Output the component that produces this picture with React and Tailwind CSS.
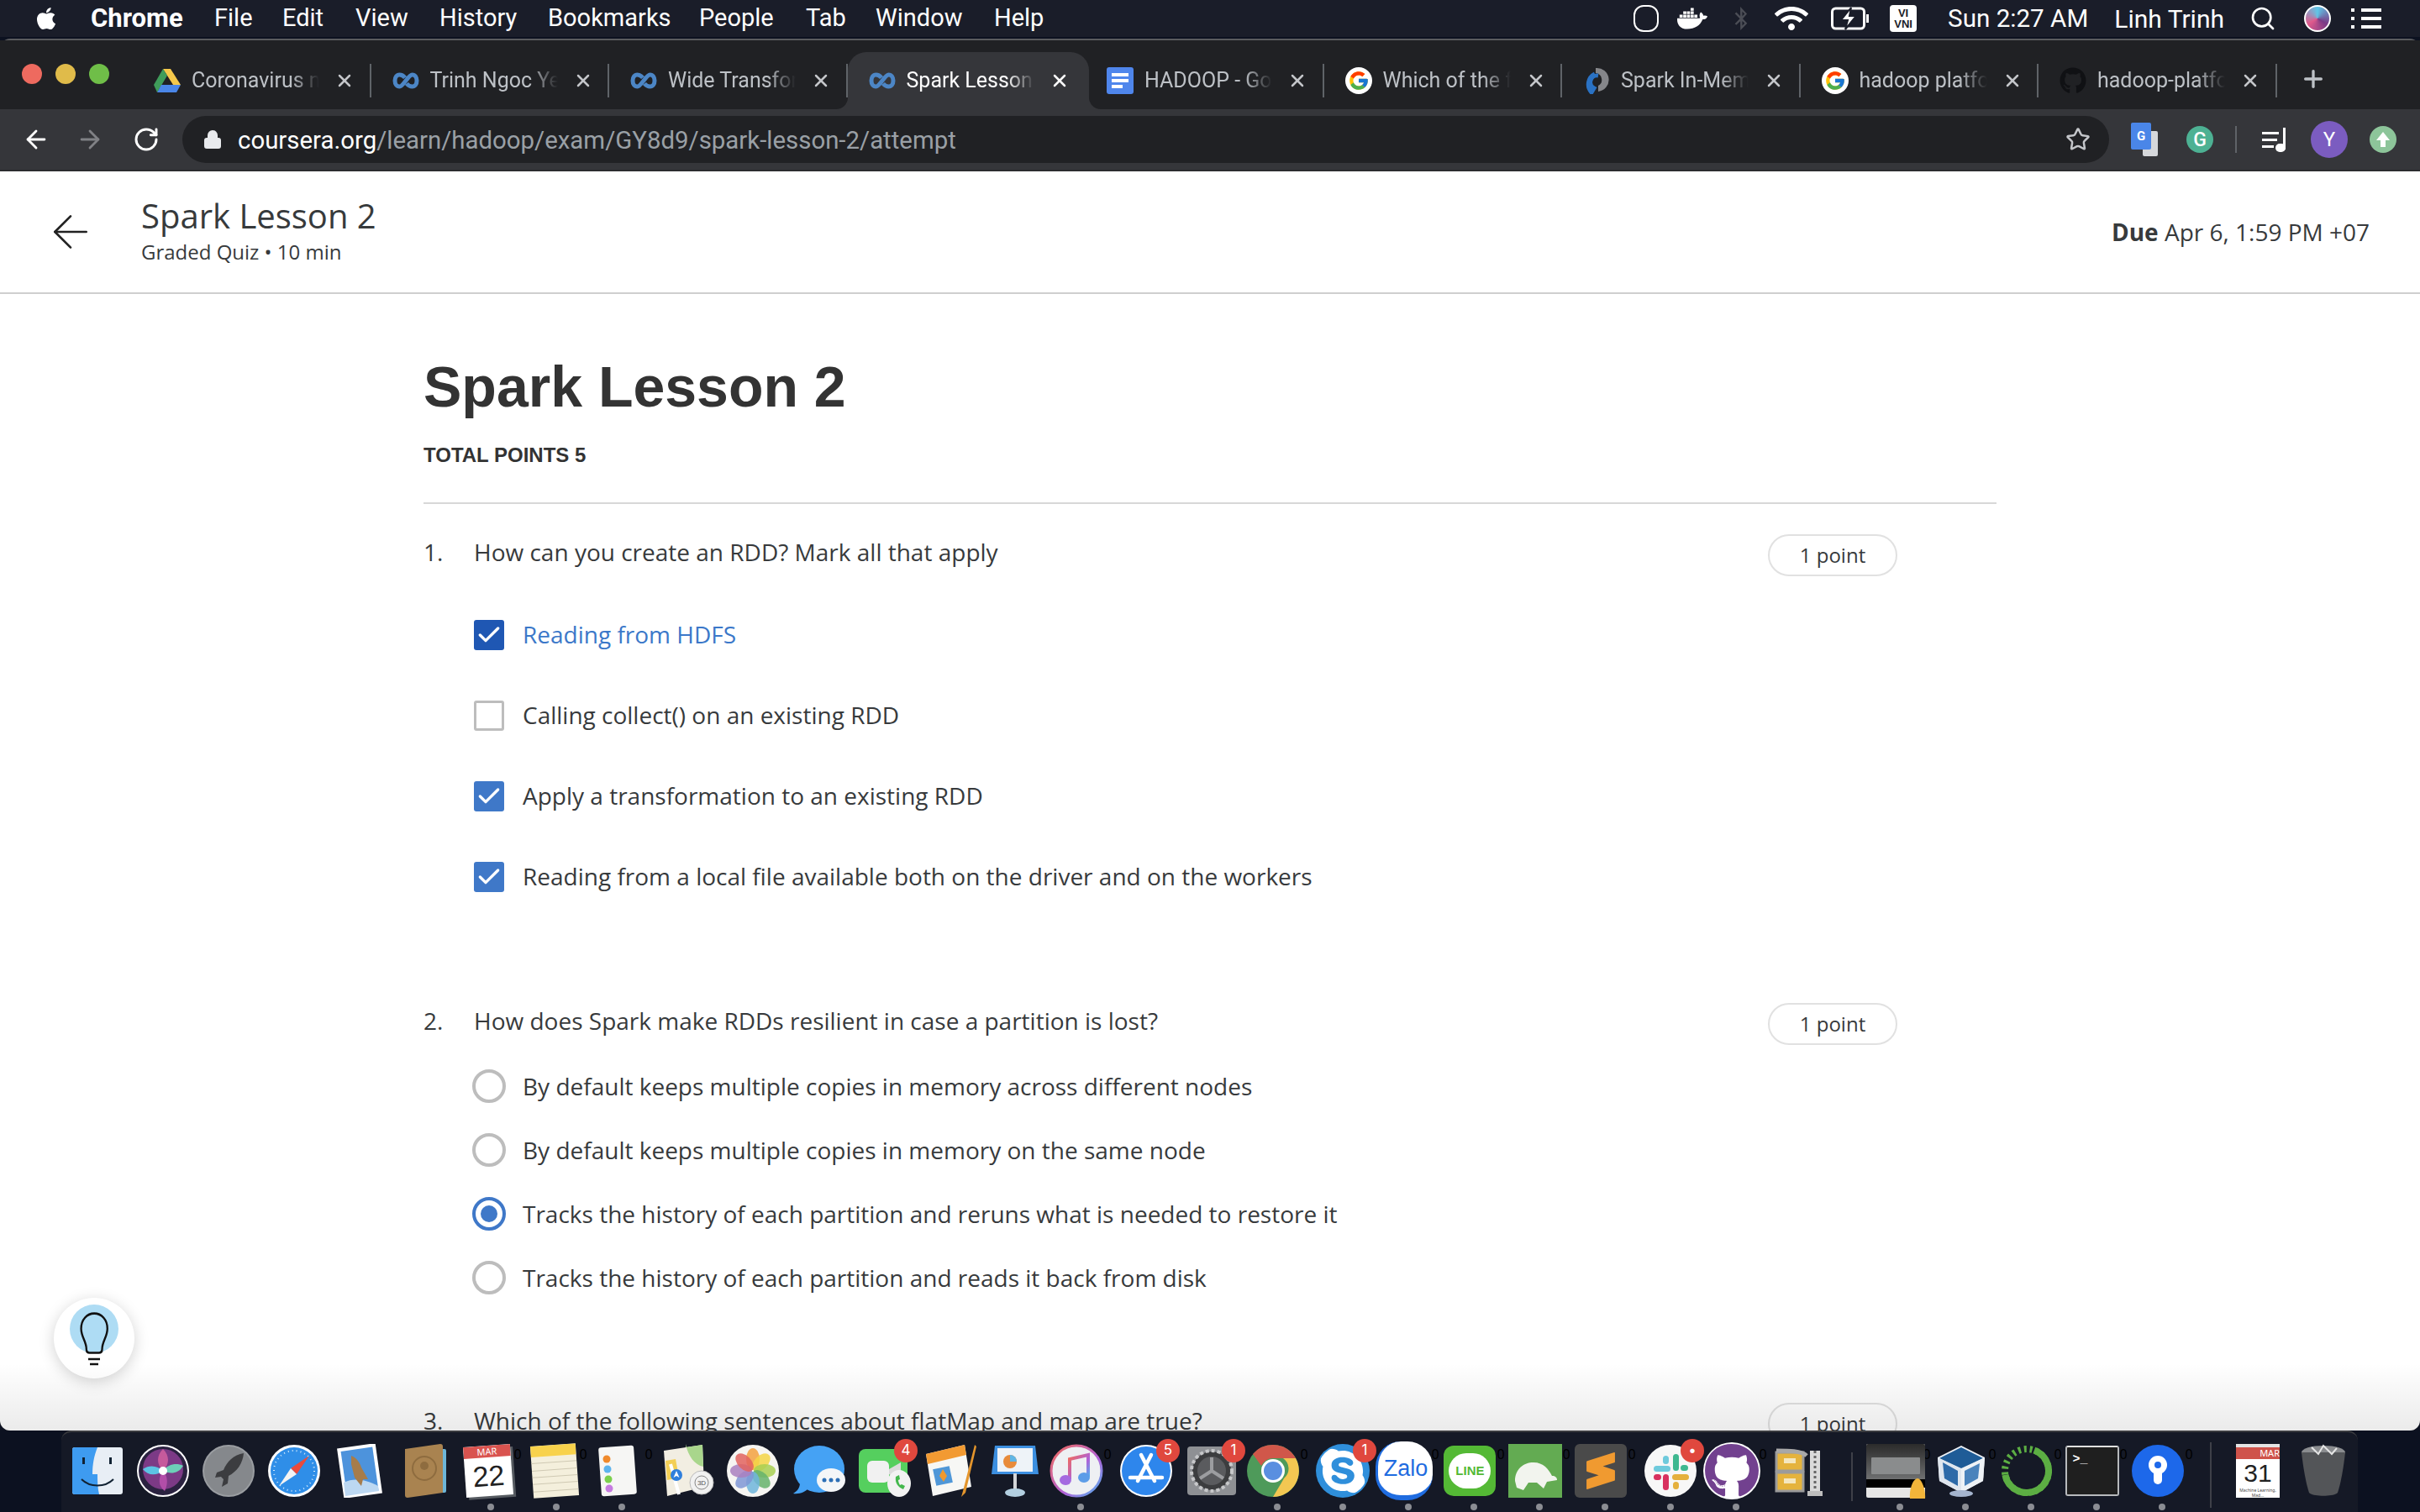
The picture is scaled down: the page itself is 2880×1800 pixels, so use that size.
import { ArrowLeft, ArrowRight, Check, Lock, Plus, RotateCw, Search, Star, X } from "lucide-react";
import { FaApple, FaBluetoothB, FaDocker, FaGithub, FaSkype, FaWifi } from "react-icons/fa";
import { FcGoogle } from "react-icons/fc";
import { SiSublimetext } from "react-icons/si";

const menus = [
  ["File", "w-[81px]"],
  ["Edit", "w-[87px]"],
  ["View", "w-[100px]"],
  ["History", "w-[129px]"],
  ["Bookmarks", "w-[180px]"],
  ["People", "w-[127px]"],
  ["Tab", "w-[83px]"],
  ["Window", "w-[141px]"],
  ["Help", "w-[80px]"],
];

function CourseraIcon() {
  return (
    <svg width="32" height="20" viewBox="0 0 32 20" fill="none" stroke="#4c86c6" strokeWidth="5">
      <path d="M15 6.5C13 4 11 3 8.5 3 5 3 3 6 3 10s2 7 5.5 7C13 17 19 3 23.5 3 27 3 29 6 29 10s-2 7-5.5 7c-2.5 0-4.500-1-6.500-3.500" />
    </svg>
  );
}

function DriveIcon() {
  return (
    <svg width="32" height="30" viewBox="0 0 32 30">
      <path d="M11 1h9l12 19h-9z" fill="#f5c84b" />
      <path d="M11 1 0 20l4 9 12-20z" fill="#3f9c5a" />
      <path d="M9 20h23l-5 9H4z" fill="#4a86e8" />
    </svg>
  );
}

function DocsIcon() {
  return (
    <div className="flex h-[32px] w-[32px] flex-col items-start justify-center gap-[3px] rounded-[3px] bg-[#4f86ec] pl-[6px]">
      <div className="h-[4px] w-[20px] bg-white" />
      <div className="h-[4px] w-[20px] bg-white" />
      <div className="h-[4px] w-[13px] bg-white" />
    </div>
  );
}

function GoogleIcon() {
  return (
    <div className="flex h-[32px] w-[32px] items-center justify-center rounded-full bg-white">
      <FcGoogle size={26} />
    </div>
  );
}

function SparkTabIcon() {
  return (
    <svg width="30" height="32" viewBox="0 0 30 32" fill="none">
      <path d="M14 1a14 14 0 0 1 3 28v-7a8 8 0 0 0-3-15z" fill="#85868a" />
      <path d="M13 8a14 14 0 0 0-4 22l3-5a8 8 0 0 1 5-15" stroke="#2a72c4" strokeWidth="5" />
    </svg>
  );
}

const tabs = [
  ["Coronavirus near me", <DriveIcon />],
  ["Trinh Ngoc Yen", <CourseraIcon />],
  ["Wide Transformations", <CourseraIcon />],
  ["Spark Lesson 2", <CourseraIcon />, true],
  ["HADOOP - Google Docs", <DocsIcon />],
  ["Which of the following", <GoogleIcon />],
  ["Spark In-Memory", <SparkTabIcon />],
  ["hadoop platform", <GoogleIcon />],
  ["hadoop-platform", <FaGithub size={32} color="#101114" />],
];

function Tab({ title, icon, active }) {
  return (
    <div className="relative flex h-[68px] w-[283.5px] shrink-0 items-center">
      {active && (
        <>
          <div className="absolute inset-y-0 left-0 right-[-4px] rounded-t-[22px] bg-[#35363a]" />
          <div className="absolute bottom-0 left-[-14px] h-[14px] w-[14px] bg-[#35363a]">
            <div className="h-full w-full rounded-br-[14px] bg-[#202124]" />
          </div>
          <div className="absolute bottom-0 right-[-18px] h-[14px] w-[14px] bg-[#35363a]">
            <div className="h-full w-full rounded-bl-[14px] bg-[#202124]" />
          </div>
        </>
      )}
      <div className="relative flex w-[58px] shrink-0 justify-center pl-[24px]">{icon}</div>
      <div className={`relative ml-[12px] w-[152px] overflow-hidden whitespace-nowrap text-[25px] [mask-image:linear-gradient(to_right,black_78%,transparent)] ${active ? "text-white" : "text-[#bdc1c6]"}`}>
        {title}
      </div>
      <X className={`relative ml-[18px] ${active ? "text-white" : "text-[#c4c6ca]"}`} size={24} strokeWidth={2.5} />
      {!active && <div className="absolute right-0 top-[14px] h-[40px] w-[2px] bg-[#5f6368]" />}
    </div>
  );
}

// dock icons, all drawn on a 64 box
function Finder() {
  return (
    <svg viewBox="0 0 64 64" className="h-full w-full">
      <rect x="2" y="4" width="60" height="56" rx="3" fill="#e8eef5" />
      <path d="M5 4h27c-4 10-6 20-6 32h6c0 8 0 16 2 24H5a3 3 0 0 1-3-3V7a3 3 0 0 1 3-3z" fill="#3e9bf0" />
      <rect x="14" y="16" width="3" height="8" fill="#123" />
      <rect x="46" y="16" width="3" height="8" fill="#123" />
      <path d="M13 42c10 10 28 10 38 0" fill="none" stroke="#123" strokeWidth="2" />
    </svg>
  );
}

function Siri() {
  return (
    <svg viewBox="0 0 64 64" className="h-full w-full">
      <circle cx="32" cy="32" r="31" fill="#fff" />
      <circle cx="32" cy="32" r="29" fill="#2a2240" />
      <circle cx="32" cy="30" r="24" fill="#7c3a86" />
      <path d="M32 6c8 8 8 18 0 26-8-8-8-18 0-26z" fill="#c65a9c" />
      <path d="M8 30c8-6 18-4 24 2-8 6-18 6-24-2z" fill="#5cc3e4" />
      <path d="M56 26c-6 10-16 10-24 6 6-8 16-10 24-6z" fill="#6dd0b8" />
      <path d="M32 32c6 6 6 16 2 24-8-6-8-16-2-24z" fill="#b24ea8" />
      <circle cx="32" cy="32" r="5" fill="#fff" />
    </svg>
  );
}

function Launchpad() {
  return (
    <svg viewBox="0 0 64 64" className="h-full w-full">
      <circle cx="32" cy="32" r="31" fill="#9a9da1" />
      <circle cx="32" cy="32" r="29" fill="#85888c" />
      <path d="M50 11c-12 2-20 10-24 20l-8 3-2 6 7-1 3 3-2 9 7-4 1-9c10-5 17-15 18-27z" fill="#3c3d40" />
    </svg>
  );
}

function Safari() {
  return (
    <svg viewBox="0 0 64 64" className="h-full w-full">
      <circle cx="32" cy="32" r="31" fill="#fff" />
      <circle cx="32" cy="32" r="28" fill="#2f8ee8" />
      <circle cx="32" cy="32" r="24" fill="none" stroke="#d6ebfb" strokeWidth="2" strokeDasharray="1 4" />
      <path d="m50 14-22 15 7 7z" fill="#ea4a3c" />
      <path d="m14 50 14-21 7 7z" fill="#f3f3f3" />
    </svg>
  );
}

function Mail() {
  return (
    <svg viewBox="0 0 64 64" className="h-full w-full">
      <rect x="9" y="2" width="46" height="60" fill="#fff" transform="rotate(-8 32 32)" />
      <rect x="13" y="6" width="38" height="52" fill="#4d93dc" transform="rotate(-8 32 32)" />
      <path d="M13 46c12-6 26-4 41 4l1 6-40 6z" fill="#bcd8f2" />
      <path d="M22 14c6 2 10 8 12 14l8 14-6 0-2 8-8-10-4-16z" fill="#a67c4b" />
    </svg>
  );
}

function Contacts() {
  return (
    <svg viewBox="0 0 64 64" className="h-full w-full">
      <rect x="50" y="6" width="7" height="52" rx="2" fill="#6db6d8" />
      <path d="M8 6 50 0c2 0 3 1 3 3v55L11 64c-2 0-3-1-3-3z" fill="#a98350" />
      <circle cx="31" cy="29" r="14" fill="none" stroke="#8e6c3f" strokeWidth="2" />
      <circle cx="31" cy="26" r="5" fill="#8e6c3f" />
    </svg>
  );
}

function CalendarIcon() {
  return (
    <div className="ml-[3px] flex h-[60px] w-[56px] rotate-[-4deg] flex-col overflow-hidden bg-white shadow-[3px_3px_0_#555a60]">
      <div className="h-[14px] bg-[#d9534f] text-center text-[11px] leading-[14px] text-white">MAR</div>
      <div className="flex-1 text-center font-['Liberation_Sans',sans-serif] text-[34px] leading-[44px] text-[#222]">22</div>
    </div>
  );
}

function Notes() {
  return (
    <div className="ml-[6px] flex h-[62px] w-[54px] rotate-[-4deg] flex-col overflow-hidden bg-[#f4efdc]">
      <div className="h-[13px] bg-[#f8d24c]" />
      <div className="flex flex-1 flex-col justify-evenly">
        <div className="h-px bg-[#cfc9b3]" />
        <div className="h-px bg-[#cfc9b3]" />
        <div className="h-px bg-[#cfc9b3]" />
        <div className="h-px bg-[#cfc9b3]" />
        <div className="h-px bg-[#cfc9b3]" />
      </div>
    </div>
  );
}

function Reminders() {
  return (
    <svg viewBox="0 0 64 64" className="h-full w-full">
      <rect x="11" y="3" width="42" height="58" rx="3" fill="#f6f6f4" transform="rotate(-4 32 32)" />
      <circle cx="19" cy="18" r="4.5" fill="#f08a2c" />
      <circle cx="20" cy="30" r="4.5" fill="#5db4ee" />
      <circle cx="21" cy="42" r="4.5" fill="#7bd04c" />
      <circle cx="22" cy="53" r="4.5" fill="#c67be0" />
    </svg>
  );
}

function Maps() {
  return (
    <svg viewBox="0 0 64 64" className="h-full w-full">
      <path d="M4 8 50 1l2 50-44 11z" fill="#f2eee2" />
      <path d="M30 4 50 1l1 26c-10-2-18-12-21-27z" fill="#a9d68c" />
      <path d="M6 20 18 18l4 22-14 3z" fill="#f3cf56" />
      <path d="M12 24 22 60" stroke="#fff" strokeWidth="4" />
      <circle cx="19" cy="37" r="7" fill="#2f7fdc" />
      <path d="m19 32 3.5 8-3.5-2-3.5 2z" fill="#fff" />
      <circle cx="49" cy="46" r="14" fill="#f1f1f1" stroke="#bbb" />
      <circle cx="49" cy="46" r="8" fill="none" stroke="#888" />
      <text x="49" y="49" textAnchor="middle" fontSize="8" fill="#555" fontFamily="Liberation Sans">3D</text>
    </svg>
  );
}

function Photos() {
  const petals = ["#f3a13f", "#f5d547", "#a8cf52", "#66b36c", "#6fb5dc", "#7f97d6", "#a97fc0", "#e2635f"];
  return (
    <svg viewBox="0 0 64 64" className="h-full w-full">
      <circle cx="32" cy="32" r="31" fill="#f6f5f2" />
      {petals.map((c, i) => (
        <ellipse key={c} cx="32" cy="18" rx="8" ry="13" fill={c} opacity=".85" transform={`rotate(${i * 45} 32 32)`} />
      ))}
    </svg>
  );
}

function Messages() {
  return (
    <svg viewBox="0 0 64 64" className="h-full w-full">
      <ellipse cx="33" cy="30" rx="30" ry="28" fill="#45a2f4" />
      <path d="M10 46c0 6-3 10-8 13 8 1 14-2 18-6z" fill="#45a2f4" />
      <ellipse cx="47" cy="43" rx="17" ry="14" fill="#f4f6f8" />
      <circle cx="39" cy="43" r="2.5" fill="#2d6fb6" />
      <circle cx="47" cy="43" r="2.5" fill="#2d6fb6" />
      <circle cx="55" cy="43" r="2.5" fill="#2d6fb6" />
    </svg>
  );
}

function FaceTime() {
  return (
    <svg viewBox="0 0 64 64" className="h-full w-full">
      <rect x="2" y="6" width="58" height="52" rx="8" fill="#55cf5e" />
      <rect x="12" y="20" width="26" height="26" rx="6" fill="#f1f1f1" />
      <path d="m38 30 14-8v22l-14-8z" fill="#dcdcdc" />
      <ellipse cx="50" cy="47" rx="14" ry="16" fill="#f2f2f2" />
      <path d="M46 39c-1 7 2 12 9 15l2-4-4-2-2 1c-1-2-2-4-2-6l2-1-1-5z" fill="#43b84c" />
    </svg>
  );
}

function Pages() {
  return (
    <svg viewBox="0 0 64 64" className="h-full w-full">
      <path d="M4 12 50 1l8 50-46 11z" fill="#f7f7f5" />
      <path d="M4 12 50 1l2 12L6 24z" fill="#f29a32" />
      <rect x="14" y="28" width="20" height="20" fill="#4f97d8" transform="rotate(-12 24 38)" />
      <path d="m24 30 5 8-4 7-5-7z" fill="#f0992e" />
      <path d="M62 1 48 56l-2 7 5-5 13-55z" fill="#e4952c" />
    </svg>
  );
}

function Keynote() {
  return (
    <svg viewBox="0 0 64 64" className="h-full w-full">
      <path d="M4 36 8 2h48l4 34z" fill="#3c8fe0" />
      <rect x="11" y="5" width="42" height="28" fill="#eef3f8" />
      <circle cx="26" cy="21" r="8" fill="#e88b3b" />
      <path d="M26 21V13a8 8 0 0 1 8 8z" fill="#5fb6e6" />
      <rect x="30" y="35" width="4" height="20" fill="#d3d5d8" />
      <ellipse cx="32" cy="58" rx="12" ry="5" fill="#b3cfe0" />
    </svg>
  );
}

function Itunes() {
  return (
    <svg viewBox="0 0 64 64" className="h-full w-full">
      <defs>
        <linearGradient id="itunesRing" x1="0" y1="0" x2="1" y2="1">
          <stop offset="0" stopColor="#f26a5a" />
          <stop offset=".6" stopColor="#b062d8" />
          <stop offset="1" stopColor="#4db6f0" />
        </linearGradient>
      </defs>
      <circle cx="32" cy="32" r="30" fill="#eef0f3" stroke="url(#itunesRing)" strokeWidth="3" />
      <path d="M24 42V18l22-5v26" fill="none" stroke="url(#itunesRing)" strokeWidth="4" />
      <ellipse cx="19" cy="43" rx="7" ry="6" fill="#a56be0" />
      <ellipse cx="41" cy="40" rx="7" ry="6" fill="#5c9de8" />
    </svg>
  );
}

function AppStore() {
  return (
    <svg viewBox="0 0 64 64" className="h-full w-full">
      <circle cx="32" cy="32" r="31" fill="#fff" />
      <circle cx="32" cy="32" r="29" fill="#2e86ec" />
      <path d="m38 13-16 31M26 13l16 31M13 40h38" stroke="#fff" strokeWidth="4.5" strokeLinecap="round" fill="none" />
    </svg>
  );
}

function SysPrefs() {
  return (
    <svg viewBox="0 0 64 64" className="h-full w-full">
      <rect x="3" y="3" width="58" height="58" rx="4" fill="#8e9094" />
      <circle cx="32" cy="32" r="23" fill="#3c3d3f" />
      <circle cx="32" cy="32" r="24" fill="none" stroke="#c7c8ca" strokeWidth="4" strokeDasharray="4 3" />
      <circle cx="32" cy="32" r="17" fill="#5a5b5e" />
      <path d="M32 32V16M32 32 18 41M32 32l14 9" stroke="#9c9da0" strokeWidth="4" />
    </svg>
  );
}

function Chrome() {
  return (
    <svg viewBox="0 0 64 64" className="h-full w-full">
      <circle cx="32" cy="32" r="31" fill="#4e9a5a" />
      <path d="M32 1a31 31 0 0 1 27 16H32a15 15 0 0 0-14 9L8 12A31 31 0 0 1 32 1z" fill="#d0574a" />
      <path d="M59 17a31 31 0 0 1-27 46l13-22a15 15 0 0 0-1-24z" fill="#f3c752" />
      <circle cx="32" cy="32" r="14" fill="#fff" />
      <circle cx="32" cy="32" r="11" fill="#5a8fe0" />
    </svg>
  );
}

function Slack() {
  return (
    <svg viewBox="0 0 64 64" className="h-full w-full">
      <circle cx="32" cy="32" r="31" fill="#f7f7f7" />
      <rect x="12" y="26" width="20" height="7" rx="3.5" fill="#6ecadc" />
      <rect x="23" y="14" width="7" height="10" rx="3.5" fill="#6ecadc" />
      <rect x="35" y="12" width="7" height="20" rx="3.5" fill="#3eb890" />
      <rect x="44" y="25" width="9" height="7" rx="3.5" fill="#3eb890" />
      <rect x="34" y="36" width="20" height="7" rx="3.5" fill="#e5b03d" />
      <rect x="35" y="45" width="7" height="9" rx="3.5" fill="#e5b03d" />
      <rect x="23" y="36" width="7" height="19" rx="3.5" fill="#d8315f" />
      <rect x="12" y="36" width="9" height="7" rx="3.5" fill="#d8315f" />
    </svg>
  );
}

function Archive() {
  return (
    <svg viewBox="0 0 64 64" className="h-full w-full">
      <rect x="2" y="10" width="32" height="22" fill="#e5b33d" stroke="#9b9b9b" strokeWidth="3" />
      <rect x="2" y="34" width="32" height="22" fill="#e5b33d" stroke="#9b9b9b" strokeWidth="3" />
      <rect x="11" y="17" width="14" height="6" fill="#f4e7c0" />
      <rect x="11" y="41" width="14" height="6" fill="#f4e7c0" />
      <path d="M2 8c14 0 30 0 36 6" fill="none" stroke="#a8a8a8" strokeWidth="5" />
      <rect x="42" y="8" width="12" height="48" fill="#dadada" />
      <path d="M48 8v48" stroke="#666" strokeWidth="3" strokeDasharray="3 3" />
      <rect x="39" y="56" width="18" height="6" fill="#bdbdbd" />
    </svg>
  );
}

function Parallels() {
  return (
    <div className="relative h-[64px] w-[70px]">
      <div className="flex h-[64px] w-[70px] flex-col overflow-hidden rounded-[2px] bg-[#e6e6e6]">
        <div className="flex-1 bg-gradient-to-b from-[#2b2b2b] to-[#6f7071] p-[6px] pt-[16px]">
          <div className="h-full rounded-[1px] bg-[#8a8c8d]" />
        </div>
        <div className="h-[10px] bg-black" />
        <div className="h-[12px]" />
      </div>
      <svg viewBox="0 0 24 28" className="absolute bottom-[-3px] right-[-2px] h-[28px] w-[24px]">
        <path d="M4 26C3 14 8 2 13 2c5 0 10 14 9 24z" fill="#f2b53a" />
      </svg>
    </div>
  );
}

function VBox() {
  return (
    <svg viewBox="0 0 64 64" className="h-full w-full">
      <path d="M32 2 60 16 58 44 32 58 6 44 4 16z" fill="#eef2f6" />
      <path d="M32 4 58 17 32 29 6 17z" fill="#1f5c97" />
      <path d="M4 16 32 30V58L6 44z" fill="#dfe6ee" />
      <path d="M10 22 28 32V50L12 41z" fill="#2d6aa8" />
      <path d="M32 30 60 16 58 44 32 58z" fill="#eef2f6" />
      <path d="M36 32 54 23 52 41 36 50z" fill="#4a83bc" />
      <ellipse cx="32" cy="59" rx="14" ry="4" fill="#a5b5cf" />
    </svg>
  );
}

function Ring() {
  return (
    <svg viewBox="0 0 64 64" className="h-full w-full">
      <circle cx="32" cy="32" r="26" fill="none" stroke="#5cae43" strokeWidth="8" strokeDasharray="108 56" transform="rotate(-70 32 32)" />
      <circle cx="32" cy="32" r="26" fill="none" stroke="#5cae43" strokeWidth="8" strokeDasharray="3 4" pathLength="163" />
    </svg>
  );
}

function Terminal() {
  return (
    <div className="h-[60px] w-[64px] rounded-[3px] border-2 border-[#b7b9bc] border-t-[#e0e0e0] bg-[#1f1f1f] pl-[6px] pt-[4px] font-['Liberation_Mono',monospace] text-[15px] font-bold leading-[22px] text-white">
      {">_"}
    </div>
  );
}

function Sourcetree() {
  return (
    <svg viewBox="0 0 64 64" className="h-full w-full">
      <circle cx="32" cy="32" r="31" fill="#1d68ea" />
      <circle cx="32" cy="25" r="11" fill="#fff" />
      <rect x="27" y="28" width="10" height="20" rx="5" fill="#fff" />
      <circle cx="32" cy="25" r="4" fill="#1d68ea" />
    </svg>
  );
}

function CalendarDoc() {
  return (
    <div className="flex h-[64px] w-[52px] flex-col overflow-hidden bg-white">
      <div className="h-[8px] bg-[#e4e4e4]" />
      <div className="h-[14px] bg-[#cf534b] text-right text-[11px] leading-[14px] text-white">MAR</div>
      <div className="text-center font-['Liberation_Sans',sans-serif] text-[30px] leading-[34px] text-[#222]">31</div>
      <div className="text-center text-[5px] leading-[6px] text-[#444]">Machine Learning, Mad...</div>
    </div>
  );
}

function Trash() {
  return (
    <svg viewBox="0 0 64 64" className="h-full w-full">
      <ellipse cx="32" cy="10" rx="26" ry="8" fill="#8a8c8f" />
      <path d="M6 10c2 18 5 36 9 48 4 5 30 5 34 0 4-12 7-30 9-48z" fill="#535558" />
      <path d="M18 4l8 8 6-10 10 10 6-7" stroke="#e6e6e6" strokeWidth="2" fill="none" />
    </svg>
  );
}

const dockLeft = [
  [<Finder />], [<Siri />], [<Launchpad />], [<Safari />], [<Mail />], [<Contacts />], [<CalendarIcon />, 0, true], [<Notes />, 0, true], [<Reminders />, 0, true],
  [<Maps />], [<Photos />], [<Messages />], [<FaceTime />, "4"], [<Pages />], [<Keynote />], [<Itunes />, 0, true], [<AppStore />, "5"], [<SysPrefs />, "1"],
  [<Chrome />, 0, true],
  [<div className="flex h-[64px] w-[64px] items-center justify-center rounded-full bg-[#2f8fdb]"><FaSkype size={60} color="#fff" className="rounded-full bg-[#2f8fdb]" /></div>, "1", true],
  [<div className="flex h-[70px] w-[68px] shrink-0 items-center justify-center rounded-[30px] border-b-[6px] border-l-[3px] border-[#1f6ce0] bg-white font-['Liberation_Sans',sans-serif] text-[27px] font-medium text-[#1f6ce0]">Zalo</div>, 0, true],
  [<div className="flex h-[60px] w-[62px] items-center justify-center rounded-[12px] bg-[#54b935]"><div className="flex h-[42px] w-[50px] items-center justify-center rounded-full bg-white font-['Liberation_Sans',sans-serif] text-[15px] font-bold text-[#54b935]">LINE</div></div>, 0, true],
  [<svg viewBox="0 0 64 64" className="h-full w-full"><rect x="0" y="0" width="64" height="64" fill="#63ab52" /><path d="M8 44c0-14 10-22 22-22s18 8 22 16c4 0 6 2 6 5l-12 2-4 8-8-7H24l-6 9-8-3z" fill="#f2f4ee" /></svg>, 0, true],
  [<div className="flex h-[64px] w-[62px] items-center justify-center rounded-[6px] bg-[#4a4a4a]"><SiSublimetext size={44} color="#f09a30" /></div>, 0, true],
  [<Slack />, "•", true],
  [<div className="flex h-[68px] w-[68px] shrink-0 items-center justify-center rounded-full bg-white"><FaGithub size={66} color="#72418f" /></div>, 0, true],
  [<Archive />],
];

const dockRight = [[<Parallels />, 0, true], [<VBox />, 0, true], [<Ring />, 0, true], [<Terminal />, 0, true], [<Sourcetree />, 0, true]];

function DockItem({ icon, badge, running }) {
  return (
    <div className="relative flex h-[97px] w-[78px] shrink-0 justify-center pt-[14px]">
      <div className="flex h-[64px] w-[64px] items-center justify-center">{icon}</div>
      {badge && (
        <div className="absolute right-[-1px] top-[8px] flex h-[28px] w-[28px] items-center justify-center rounded-full bg-[#e0483e] font-['Inter',sans-serif] text-[17px] text-white">
          {badge}
        </div>
      )}
      {running && <div className="absolute bottom-[4px] left-[35px] h-[8px] w-[8px] rounded-full bg-[#8b8d93]" />}
    </div>
  );
}

function Dock() {
  return (
    <div className="absolute bottom-0 left-[73px] flex h-[97px] w-[2733px] items-start rounded-t-[12px] border-t-2 border-[#3a3b3f] bg-[#151926] pl-[4px]">
      {dockLeft.map(([icon, badge, running], i) => (
        <DockItem key={i} icon={icon} badge={badge} running={running} />
      ))}
      <div className="ml-[20px] mr-[17px] mt-[24px] h-[58px] w-[2px] bg-[#3e4048]" />
      {dockRight.map(([icon, badge, running], i) => (
        <DockItem key={i} icon={icon} badge={badge} running={running} />
      ))}
      <div className="ml-[18px] mr-[16px] mt-[12px] h-[78px] w-[2px] bg-[#3e4048]" />
      <DockItem icon={<CalendarDoc />} />
      <DockItem icon={<Trash />} />
    </div>
  );
}

function MenuBar() {
  return (
    <div className="flex h-[44px] items-center bg-[#1a1d29] font-['Roboto',sans-serif] text-[29px] text-white">
      <FaApple size={30} className="ml-[40px] mr-[38px]" />
      <div className="w-[147px] text-[31px] font-bold">Chrome</div>
      {menus.map(([name, w]) => (
        <div key={name} className={w}>{name}</div>
      ))}
      <div className="ml-auto flex items-center pr-[46px]">
        <div className="mr-[22px] h-[32px] w-[30px] rounded-[12px] border-2 border-white" />
        <FaDocker size={36} className="mr-[26px]" />
        <FaBluetoothB size={28} className="mr-[26px] text-[#4b4d55]" />
        <FaWifi size={40} className="mr-[27px]" />
        <svg width="46" height="28" viewBox="0 0 46 28" fill="none" className="mr-[24px]">
          <rect x="1.5" y="2" width="38" height="24" rx="4" stroke="#fff" strokeWidth="3" />
          <rect x="42" y="9" width="3" height="10" fill="#fff" />
          <path d="M24 1 12 16h8l-3 11 13-16h-8z" fill="#fff" stroke="#1a1d29" strokeWidth="2" />
        </svg>
        <div className="mr-[37px] flex h-[32px] w-[32px] flex-col items-center justify-center rounded-[4px] bg-white font-['Liberation_Sans',sans-serif] text-[13px] font-bold leading-[13px] text-[#1a1d29]">
          <span>VI</span>
          <span>VNI</span>
        </div>
        <div className="mr-[31px] text-[29.6px]">Sun 2:27 AM</div>
        <div className="mr-[30px] text-[30px]">Linh Trinh</div>
        <Search size={32} className="mr-[33px]" strokeWidth={2} />
        <div className="mr-[24px] h-[32px] w-[32px] rounded-full border-2 border-white bg-[conic-gradient(#5fc7e8,#7b3a86,#e05a8c,#5fc7e8)]" />
        <div className="grid w-[36px] grid-cols-[4px_24px] gap-x-[8px] gap-y-[6px]">
          <div className="h-[4px] bg-white" />
          <div className="h-[4px] bg-white" />
          <div className="h-[4px] bg-white" />
          <div className="h-[4px] bg-white" />
          <div className="h-[4px] bg-white" />
          <div className="h-[4px] bg-white" />
        </div>
      </div>
    </div>
  );
}

function TabStrip() {
  return (
    <div className="flex h-[82px] items-end bg-[#202124] font-['Roboto',sans-serif]">
      <div className="mb-[30px] flex w-[158px] shrink-0 gap-[16px] pl-[26px]">
        <div className="h-[24px] w-[24px] rounded-full bg-[#ee6a5f]" />
        <div className="h-[24px] w-[24px] rounded-full bg-[#e0bb4a]" />
        <div className="h-[24px] w-[24px] rounded-full bg-[#6fbe48]" />
      </div>
      {tabs.map(([title, icon, active]) => (
        <Tab key={title} title={title} icon={icon} active={active} />
      ))}
      <Plus className="mb-[20px] ml-[27px] text-[#bdc1c6]" size={32} strokeWidth={2.5} />
    </div>
  );
}

function Toolbar() {
  return (
    <div className="flex h-[74px] items-start border-b-2 border-[#2b2c2f] bg-[#35363a] pt-[8px] font-['Roboto',sans-serif]">
      <div className="flex h-[56px] w-[217px] shrink-0 items-center pl-[26px] text-white">
        <ArrowLeft size={34} strokeWidth={2} />
        <ArrowRight size={34} strokeWidth={2} className="ml-[30px] text-[#808185]" />
        <RotateCw size={32} strokeWidth={2.2} className="ml-[34px]" />
      </div>
      <div className="flex h-[56px] w-[2293px] items-center rounded-full bg-[#202124] pl-[24px] pr-[22px] text-[29.4px]">
        <Lock size={24} fill="#e8eaed" className="text-[#e8eaed]" />
        <div className="ml-[18px] pt-[2px] text-white">
          coursera.org<span className="text-[#9aa0a6]">/learn/hadoop/exam/GY8d9/spark-lesson-2/attempt</span>
        </div>
        <Star size={30} strokeWidth={2} className="ml-auto text-[#c4c6ca]" />
      </div>
      <div className="flex h-[56px] flex-1 items-center">
        <div className="relative ml-[26px] h-[40px] w-[32px]">
          <div className="absolute right-0 top-[10px] h-[30px] w-[18px] rounded-[2px] bg-[#d6d8db]" />
          <div className="absolute left-0 top-0 flex h-[32px] w-[24px] items-center justify-center rounded-[2px] bg-[#4a86e8] text-[15px] font-bold text-white">G</div>
        </div>
        <div className="ml-[34px] flex h-[32px] w-[32px] items-center justify-center rounded-full bg-[#4db193] text-[23px] font-medium leading-none text-white">G</div>
        <div className="ml-[26px] h-[32px] w-[2px] bg-[#5f6368]" />
        <div className="relative ml-[30px] flex h-[32px] w-[32px] flex-col justify-center gap-[5px]">
          <div className="h-[3px] w-[20px] bg-white" />
          <div className="h-[3px] w-[18px] bg-white" />
          <div className="h-[3px] w-[14px] bg-white" />
          <div className="absolute right-[4px] top-[2px] h-[26px] w-[3px] bg-white" />
          <div className="absolute bottom-[1px] right-[4px] h-[10px] w-[12px] rounded-full bg-white" />
        </div>
        <div className="ml-[26px] flex h-[44px] w-[44px] items-center justify-center rounded-full bg-[#7b5cc0] text-[24px] text-white">Y</div>
        <div className="ml-[26px] flex h-[32px] w-[32px] items-center justify-center rounded-full bg-[#8dc59a]">
          <svg width="18" height="20" viewBox="0 0 18 20"><path d="M9 1 17 11H12V19H6V11H1z" fill="#fff" /></svg>
        </div>
      </div>
    </div>
  );
}

function CheckOption({ label, checked, tone }) {
  return (
    <div className="flex h-[96px] items-center gap-[22px]">
      {checked ? (
        <div className={`flex h-[36px] w-[36px] items-center justify-center rounded-[3px] ${tone || "bg-[#3f78c8]"}`}>
          <Check size={32} strokeWidth={2.5} color="#fff" />
        </div>
      ) : (
        <div className="h-[36px] w-[36px] rounded-[3px] border-[3px] border-[#bdbdbd]" />
      )}
      <div className={`pb-[2px] ${tone ? "text-[#3b78c9]" : ""}`}>{label}</div>
    </div>
  );
}

function RadioOption({ label, checked }) {
  return (
    <div className="ml-[-2px] flex h-[76px] items-center gap-[20px]">
      {checked ? (
        <div className="flex h-[40px] w-[40px] items-center justify-center rounded-full border-[4px] border-[#3f78c8]">
          <div className="h-[20px] w-[20px] rounded-full bg-[#3f78c8]" />
        </div>
      ) : (
        <div className="h-[40px] w-[40px] rounded-full border-[4px] border-[#bdbdbd]" />
      )}
      <div>{label}</div>
    </div>
  );
}

function Question({ num, text, className }) {
  return (
    <div className={`flex h-[50px] items-start pr-[118px] ${className}`}>
      <div className="w-[60px] leading-[42px]">{num}.</div>
      <div className="flex-1 leading-[42px]">{text}</div>
      <div className="flex h-[50px] w-[154px] items-center justify-center rounded-full border-2 border-[#e1e1e1] text-[24px]">1 point</div>
    </div>
  );
}

function Page() {
  return (
    <div className="relative flex-1 overflow-hidden rounded-b-[12px] bg-white font-['Open_Sans',sans-serif] text-[#373a3c]">
      <div className="flex h-[146px] items-center border-b-2 border-[#cfcfcf] pr-[60px]">
        <ArrowLeft size={64} strokeWidth={1} className="ml-[52px] text-[#222]" />
        <div className="ml-[52px] pb-[4px]">
          <div className="text-[40px] leading-[52px]">Spark Lesson 2</div>
          <div className="text-[24px] leading-[34px]">Graded Quiz • 10 min</div>
        </div>
        <div className="ml-auto text-[28px]">
          <span className="font-bold">Due</span> Apr 6, 1:59 PM +07
        </div>
      </div>

      <div className="ml-[504px] w-[1872px] pt-[68px]">
        <h1 className="font-['Liberation_Sans',sans-serif] text-[68px] font-bold leading-[84px] text-[#333]">Spark Lesson 2</h1>
        <div className="mt-[25px] font-['Liberation_Sans',sans-serif] text-[24px] font-bold leading-[30px] text-[#333]">TOTAL POINTS 5</div>
        <div className="mt-[41px] border-t-2 border-[#d8d8d8] pt-[36px] text-[28px]">
          <Question num="1" text="How can you create an RDD? Mark all that apply" />
          <div className="ml-[60px] mt-[22px]">
            <CheckOption label="Reading from HDFS" checked tone="bg-[#1f57b3]" />
            <CheckOption label="Calling collect() on an existing RDD" />
            <CheckOption label="Apply a transformation to an existing RDD" checked />
            <CheckOption label="Reading from a local file available both on the driver and on the workers" checked />
          </div>

          <Question num="2" text="How does Spark make RDDs resilient in case a partition is lost?" className="mt-[102px]" />
          <div className="ml-[60px] mt-[11px]">
            <RadioOption label="By default keeps multiple copies in memory across different nodes" />
            <RadioOption label="By default keeps multiple copies in memory on the same node" />
            <RadioOption label="Tracks the history of each partition and reruns what is needed to restore it" checked />
            <RadioOption label="Tracks the history of each partition and reads it back from disk" />
          </div>

          <Question num="3" text="Which of the following sentences about flatMap and map are true?" className="mt-[111px]" />
        </div>
      </div>

      <div className="absolute bottom-[62px] left-[64px] flex h-[96px] w-[96px] items-center justify-center rounded-full bg-white shadow-[0_4px_18px_rgba(0,0,0,0.18)]">
        <svg width="62" height="88" viewBox="0 0 62 88" fill="none">
          <circle cx="31" cy="33" r="29" fill="#aedcf4" />
          <path d="M31 13c-11 0-20 8-20 20 0 11 8 17 8 27 0 3 2 5 5 5h14c3 0 5-2 5-5 0-10 8-16 8-27 0-12-9-20-20-20z" transform="translate(7 3) scale(.78 .9)" stroke="#111" strokeWidth="3" />
          <path d="M24 69h14M26 75h10" stroke="#111" strokeWidth="2.5" />
        </svg>
      </div>

      <div className="pointer-events-none absolute inset-x-0 bottom-0 h-[80px] bg-gradient-to-b from-transparent to-black/8" />
    </div>
  );
}

export default function App() {
  return (
    <div className="relative flex h-[1800px] w-[2880px] flex-col overflow-hidden bg-[#0c1120]">
      <MenuBar />
      <div className="mt-[2px] flex h-[1657px] flex-col rounded-[12px] border-t-2 border-[#5a5b5e] bg-[#202124]">
        <TabStrip />
        <Toolbar />
        <Page />
      </div>
      <Dock />
    </div>
  );
}
